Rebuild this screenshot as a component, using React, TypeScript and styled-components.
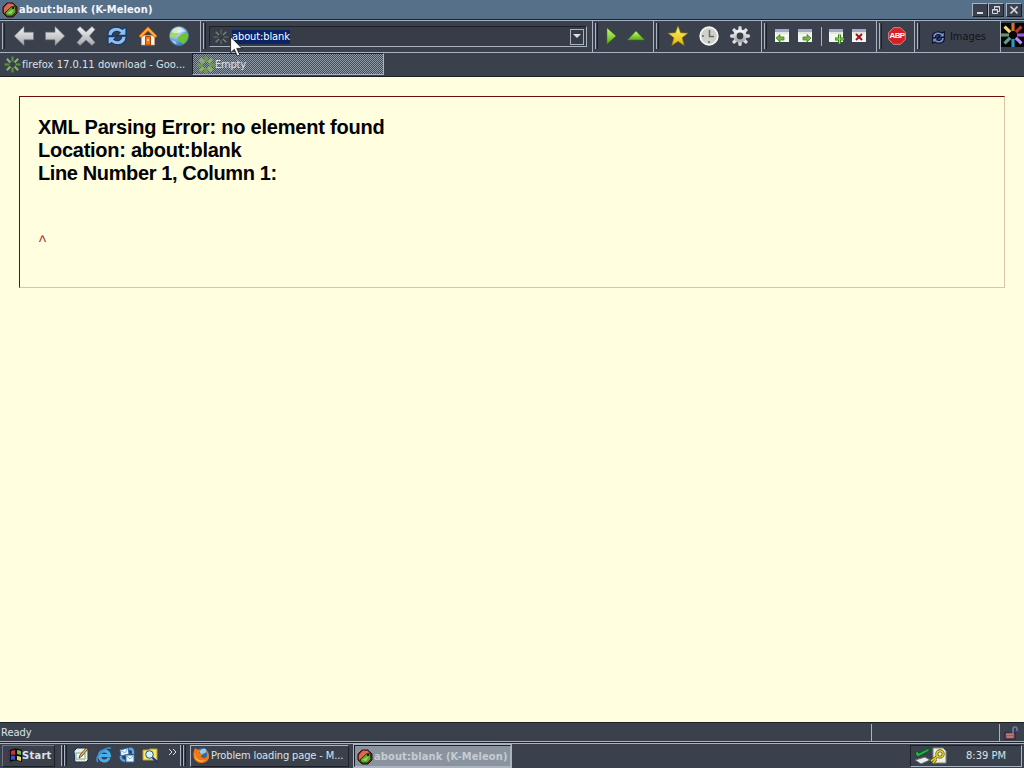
import type { ReactNode } from 'react'
import { createGlobalStyle, styled } from 'styled-components'

const COLORS = {
  chrome: '#3b414c',
  title: '#57708a',
  light: '#a9b3c2',
  dark: '#1c2028',
  text: '#dde1e8',
  page: '#ffffe0'
}

const GlobalStyle = createGlobalStyle`
  * {
    box-sizing: border-box;
  }

  body {
    margin: 0;
    overflow: hidden;
    background: ${COLORS.chrome};
  }

  svg {
    display: block;
    flex: none;
  }
`

const Screen = styled.div`
  display: flex;
  flex-direction: column;
  width: 1024px;
  height: 768px;
  color: ${COLORS.text};
  background: ${COLORS.chrome};
  font-family: 'DejaVu Sans Condensed', 'DejaVu Sans', sans-serif;
  font-stretch: condensed;
  font-size: 11px;
  white-space: nowrap;
  overflow: hidden;
  cursor: default;
`

const Label = styled.span<{ $spacing?: number; $bold?: boolean; $color?: string }>`
  display: block;
  flex: none;
  letter-spacing: ${p => p.$spacing ?? 0}px;
  font-weight: ${p => (p.$bold ? 700 : 400)};
  color: ${p => p.$color ?? 'inherit'};
  line-height: 14px;
`

const TitleBar = styled.div`
  display: flex;
  align-items: center;
  gap: 1px;
  height: 19px;
  padding: 0 2px;
  background: ${COLORS.title};
`

const WindowButtons = styled.div`
  display: flex;
  margin-left: auto;

  button:last-child {
    margin-left: 2px;
  }
`

const WindowButton = styled.button`
  display: flex;
  align-items: center;
  justify-content: center;
  width: 16px;
  height: 14px;
  padding: 0;
  border: 1px solid;
  border-color: ${COLORS.light} ${COLORS.dark} ${COLORS.dark} ${COLORS.light};
  background: ${COLORS.chrome};
`

const Toolbar = styled.div`
  display: flex;
  height: 34px;
  border-top: 1px solid ${COLORS.dark};
  border-bottom: 1px solid ${COLORS.light};
  box-shadow: inset 0 1px ${COLORS.light};
`

const Band = styled.div<{ $width: number }>`
  display: flex;
  align-items: center;
  width: ${p => p.$width}px;
  padding: 0 0 0 2px;
  border-right: 1px solid ${COLORS.light};
`

const Gripper = styled.div<{ $height?: number }>`
  flex: none;
  width: 3px;
  height: ${p => p.$height ?? 26}px;
  border-left: 1px solid ${COLORS.light};
  border-right: 1px solid ${COLORS.dark};
`

const IconCells = styled.div<{ $cell: number; $left: number }>`
  display: grid;
  grid-auto-flow: column;
  grid-auto-columns: ${p => p.$cell}px;
  place-items: center;
  margin-left: ${p => p.$left}px;
`

const Divider = styled.div`
  width: 1px;
  height: 19px;
  margin: 0 1px 0 0;
  background: ${COLORS.light};
`

const AddressBox = styled.div`
  display: flex;
  align-items: center;
  width: 378px;
  height: 21px;
  margin: 1px 0 0 3px;
  padding: 0 2px 0 3px;
  border: 1px solid;
  border-color: ${COLORS.dark} ${COLORS.light} ${COLORS.light} ${COLORS.dark};
  background: #373c47;
`

const Selection = styled.div`
  height: 14px;
  margin: 1px 0 0 3px;
  color: #fff;
  background: #0a2466;
`

const DropButton = styled.div`
  display: flex;
  align-items: center;
  justify-content: center;
  width: 14px;
  height: 16px;
  margin-left: auto;
  border: 1px solid ${COLORS.light};
`

const Faded = styled.div`
  display: flex;
  align-items: center;
  gap: 5px;
  margin: 2px 0 0 12px;
`

const Logo = styled.svg`
  margin-top: 3px;
`

const TabBar = styled.div`
  display: flex;
  height: 24px;
  border-bottom: 1px solid ${COLORS.dark};
`

const Tab = styled.div<{ $active?: boolean }>`
  display: flex;
  align-items: center;
  gap: ${p => (p.$active ? 0 : 1)}px;
  width: 192px;
  height: 22px;
  padding: ${p => (p.$active ? '2px 4px 0' : '1px 4px 0')};
  border: ${p => (p.$active ? '1px solid' : '0')};
  border-color: ${COLORS.dark} ${COLORS.light} ${COLORS.light} ${COLORS.dark};
  background: ${p =>
    p.$active ? 'repeating-conic-gradient(#8f99a6 0 25%, #464e5b 0 50%) 0 0 / 2px 2px' : 'none'};
`

const Page = styled.main`
  flex: 1;
  padding: 19px;
  background: ${COLORS.page};
`

const ErrorBox = styled.section`
  height: 192px;
  padding: 19px 18px;
  border: 1px solid;
  border-color: #700c0c #dfc3a6 #dfc3a6 #700c0c;
  color: #000;
  font: bold 20px/23px 'Liberation Sans', Arial, sans-serif;
`

const ErrorLine = styled.div<{ $spacing: number }>`
  letter-spacing: ${p => p.$spacing}px;
`

const SourceLine = styled.pre`
  margin: 49px 0 0;
  color: #a52020;
  font: 15px/16px 'Liberation Mono', monospace;
`

const StatusBar = styled.div`
  display: flex;
  align-items: center;
  height: 19px;
  padding: 1px 0 0 1px;
  border-top: 1px solid ${COLORS.dark};
`

const StatusPane = styled.div<{ $width: number }>`
  display: flex;
  align-items: center;
  width: ${p => p.$width}px;
  height: 17px;
  border-right: 1px solid ${COLORS.light};
`

const Taskbar = styled.div`
  display: flex;
  align-items: center;
  height: 27px;
  padding: 0 2px 0 3px;
  border-top: 1px solid ${COLORS.light};
  box-shadow: inset 0 1px ${COLORS.dark}, inset 0 2px ${COLORS.light};
`

const TaskButton = styled.div<{ $width: number; $left: number; $pressed?: boolean }>`
  display: flex;
  align-items: center;
  gap: 1px;
  width: ${p => p.$width}px;
  height: 22px;
  margin: 1px 0 0 ${p => p.$left}px;
  padding: ${p => (p.$pressed ? '2px 2px 0' : '0 2px')};
  border: 1px solid;
  border-color: ${p =>
    p.$pressed
      ? `${COLORS.dark} ${COLORS.light} ${COLORS.light} ${COLORS.dark}`
      : `${COLORS.light} ${COLORS.dark} ${COLORS.dark} ${COLORS.light}`};
  background: ${p => (p.$pressed ? '#8b949e' : COLORS.chrome)};
  box-shadow: ${p => (p.$pressed ? `0 0 0 1px ${COLORS.light}` : 'none')};
`

const StartButton = styled(TaskButton)`
  gap: 0;
  border-color: #6d7784 ${COLORS.dark} ${COLORS.dark} #6d7784;
`

const Tray = styled.div`
  display: flex;
  align-items: center;
  width: 112px;
  height: 22px;
  margin: 1px 0 0 auto;
  padding-left: 3px;
  border: 1px solid;
  border-color: ${COLORS.dark} ${COLORS.light} ${COLORS.light} ${COLORS.dark};
`

const MoreIcon = styled.svg`
  margin: -7px 1px 0 7px;
`

const Pointer = styled.svg`
  position: absolute;
  left: 230px;
  top: 36px;
`

const Defs = styled.svg`
  position: absolute;
`

// octagonal sign with its lettering centred on top
const Badge = styled.div`
  display: grid;
  place-items: center;
  width: 22px;
  height: 20px;

  > * {
    grid-area: 1 / 1;
  }
`

const BadgeText = styled.span`
  color: #fff;
  font: bold 8px/10px 'Liberation Sans', Arial, sans-serif;
  letter-spacing: -0.6px;
`

type IconProps = { size?: number; box?: number; children: ReactNode }

const Icon = ({ size = 20, box = 20, children }: IconProps) => (
  <svg width={size} height={size} viewBox={`0 0 ${box} ${box}`}>
    {children}
  </svg>
)

const Gradients = () => (
  <Defs width='0' height='0'>
    <defs>
      <linearGradient id='silver' x1='0' y1='0' x2='0' y2='1'>
        <stop offset='0' stopColor='#f4f4f4' />
        <stop offset='1' stopColor='#a4a7aa' />
      </linearGradient>
      <linearGradient id='green' x1='0' y1='0' x2='0' y2='1'>
        <stop offset='0' stopColor='#caff75' />
        <stop offset='1' stopColor='#58ad15' />
      </linearGradient>
      <linearGradient id='gold' x1='0' y1='0' x2='0' y2='1'>
        <stop offset='0' stopColor='#fff66a' />
        <stop offset='1' stopColor='#e5b800' />
      </linearGradient>
      <radialGradient id='globe' cx='.35' cy='.25' r='.8'>
        <stop offset='0' stopColor='#e4f5ff' />
        <stop offset='1' stopColor='#2872c4' />
      </radialGradient>
    </defs>
  </Defs>
)

const Arrow = ({ right }: { right?: boolean }) => (
  <Icon>
    <path
      transform={right ? 'matrix(-1 0 0 1 20 0)' : undefined}
      d='M.3 10 10 .5v5.7h9.5v7.6H10v5.7Z'
      fill='url(#silver)'
      stroke='#747980'
      strokeWidth='.6'
    />
  </Icon>
)

const Refresh = ({ size = 20, dim }: { size?: number; dim?: boolean }) => (
  <Icon size={size}>
    <g fill={dim ? '#7591d8' : '#8fbdec'} stroke={dim ? '#0d1428' : '#163a6b'} strokeWidth={dim ? 1.8 : 1.3}>
      <path d='M1 10C0 2 9-1 15.5 3.2L19 1v8.5h-9l3-3C9 4 5.5 6 5 10Z' />
      <path d='M19 10c1 8-8 11-14.5 6.8L1 19v-8.500h9l-3 3c4 2.500 7.500.5 8-3.500Z' />
    </g>
  </Icon>
)

const Burst = ({ colors, size = 16, width = 2 }: { colors: string[]; size?: number; width?: number }) => (
  <Icon size={size} box={16}>
    {Array.from({ length: 8 }, (_, i) => (
      <path
        key={i}
        d='M8 .5v4.7'
        stroke={colors[i % colors.length]}
        strokeWidth={width}
        transform={`rotate(${i * 45} 8 8)`}
      />
    ))}
  </Icon>
)

const Meleon = ({ size = 16 }: { size?: number }) => (
  <Icon size={size} box={16}>
    <path d='M5 1h6l4 4v6l-4 4H5l-4-4V5Z' fill='#8c2419' stroke='#24130c' />
    <path d='M2 6 6 1.5 11 2l2 3-6 2-5 4Z' fill='#d96a55' />
    <path d='m3 11 6-6 4-1 1 6-4 4-5 0Z' fill='#55a832' stroke='#14250e' strokeWidth='.8' />
    <path d='m5 11 7-4-3 5Z' fill='#a3d45a' />
    <path d='M10 5h2v2h-2Z' fill='#152010' />
  </Icon>
)

const Home = () => (
  <Icon>
    <path d='M3.5 9.5h13V19h-13Z' fill='#f4f3ee' stroke='#d8a87e' strokeWidth='.6' />
    <path d='M10 .8 19 10l-2 1.7-7-7-7 7L1 10Z' fill='#ffb13c' stroke='#df5b08' />
    <path d='M7.5 10.5h5V19h-5Z' fill='#f37717' stroke='#b54408' />
    <path d='M9 13h2v2H9Z' fill='#ffdd88' />
  </Icon>
)

const Globe = () => (
  <Icon>
    <circle cx='10' cy='10' r='9.5' fill='url(#globe)' stroke='#6a98b9' strokeWidth='.5' />
    <path d='M1 10c1-5 5-8 10-8L8 6l2 2-4 3-4 1Z' fill='#a2d866' />
    <path d='m9 11 4-3 6-1c1 5-2 9-5 11l-3-3-3-1Z' fill='#6dc52f' />
    <path d='M3 6c4-6 10-6 14 0-4-1-9 3-14 0Z' fill='#fff' opacity='.55' />
    <path d='M3 14q3 1 5 4-3 0-5-4Z' fill='#b9e4ff' />
  </Icon>
)

const Clock = () => (
  <Icon>
    <circle cx='10' cy='10' r='8.8' fill='#cfd1cc' stroke='#f6f6f3' strokeWidth='1.8' />
    <path d='M10.5 4v6.5H15M3 10h2m5 5v2' fill='none' stroke='#666b68' strokeWidth='1.5' />
  </Icon>
)

const Gear = () => (
  <Icon>
    {[0, 45, 90, 135, 180, 225, 270, 315].map(angle => (
      <path key={angle} d='m8 5 .6-4.8h2.8L12 5Z' fill='#dedede' transform={`rotate(${angle} 10 10)`} />
    ))}
    <circle cx='10' cy='10' r='5' fill='none' stroke='url(#silver)' strokeWidth='3.2' />
  </Icon>
)

const PageIcon = ({ kind }: { kind: 'back' | 'next' | 'new' | 'close' }) => (
  <Icon size={16} box={16}>
    <path d='M1 1h14v13H1Z' fill='#f4f7f0' />
    <path d='M1 1h14v3H1Z' fill='#a0a9c9' />
    <path d='M2 5h12' stroke='#d1d6cd' />
    {kind === 'back' && <path d='m2 10 4-3.5V9h4v3H6v2Z' fill='#78b93c' stroke='#37751a' strokeWidth='.7' />}
    {kind === 'next' && <path d='m14 10-4-3.5V9H6v3h4v2Z' fill='#78b93c' stroke='#37751a' strokeWidth='.7' />}
    {kind === 'new' && (
      <>
        <path d='M11.5 6.5V16M7 11h9' stroke='#32821d' strokeWidth='3' />
        <path d='M11.5 7v8.5M7.5 11H16' stroke='#a8e64c' />
      </>
    )}
    {kind === 'close' && <path d='m5 6 6 6m0-6-6 6' stroke='#a3121c' strokeWidth='2' />}
  </Icon>
)

const BlockBadge = () => (
  <Badge>
    <svg width='18' height='18' viewBox='0 0 18 18'>
      <path d='M5.5.7h7l4.8 4.8v7l-4.8 4.8h-7L.7 12.5v-7Z' fill='#d91e24' stroke='#e9a0a0' strokeWidth='.8' />
    </svg>
    <BadgeText>ABP</BadgeText>
  </Badge>
)

const WindowsFlag = () => (
  <Icon size={17} box={17}>
    <path d='M0 4h2v2H0Zm0 4h2v2H0Zm0 4h2v2H0Z' fill='#7c2732' />
    <path d='M3 3h2v2H3Zm0 4h2v2H3Zm0 4h2v2H3Z' fill='#24357e' />
    <path d='M5 3q5-3 12 0v12q-7-3-12 0Z' fill='#080a0e' />
    <path d='M6 4q2-1 4-1v5q-2-1-4 0Z' fill='#c6382b' />
    <path d='M12 3q2 0 4 1v4l-4-1Z' fill='#75b83c' />
    <path d='M6 9q2-1 4 0v4q-2-1-4 0Z' fill='#3157d0' />
    <path d='M12 9q2 0 4 1v4l-4-1Z' fill='#e8d553' />
  </Icon>
)

const DesktopIcon = () => (
  <Icon size={16} box={16}>
    <path d='M1 4 4 1h9l2 2v10l-2 2H2Z' fill='#e8f0de' stroke='#16334c' />
    <path d='M3 6h9v6H3Z' fill='#fffce4' stroke='#72a3b1' />
    <path d='m6 11 1-3 6-7 2 1-6 7Z' fill='#f1b34c' stroke='#5c2b14' strokeWidth='.8' />
  </Icon>
)

const ExplorerIcon = () => (
  <Icon size={16} box={16}>
    <path d='M13 10.5c-1 5-9.500 5-9.500-2 0-6 9-6 10 0H5' fill='none' stroke='#4caee9' strokeWidth='3' />
    <path d='M2 15C-2 10 8 0 15 1' fill='none' stroke='#3a91db' strokeWidth='1.5' />
  </Icon>
)

const MailIcon = () => (
  <Icon size={16} box={16}>
    <path d='m1 3 8-2 1 6-8 2ZM7 8h8v7H7Z' fill='#e9f3ff' stroke='#2d72b5' />
    <path d='m1 3 5 3 3-5M7 8l4 4 4-4' fill='none' stroke='#86b8e4' />
    <path d='M10 2q5-1 4 5M2 9q-1 4 4 5' fill='none' stroke='#55a5ef' strokeWidth='2.5' />
  </Icon>
)

const SearchFolder = () => (
  <Icon size={16} box={16}>
    <path d='M1 3h5l2-1h7v11H1Z' fill='#f7e96c' stroke='#b89d2a' />
    <circle cx='7.5' cy='7.5' r='3.8' fill='#d7f1fa' stroke='#1d567c' />
    <path d='m10.5 10.5 5 5' stroke='#153b83' strokeWidth='2' />
  </Icon>
)

const Fox = () => (
  <Icon size={17} box={17}>
    <circle cx='9' cy='8' r='7' fill='#286aaf' />
    <path d='M9 2c4-2 6 2 3 4L8 8 6 4Z' fill='#91cce9' />
    <path d='M2 1c2 2 3 1 5 2L6 6l4 1-2 2c1 3 6 3 6-1l-1-5c5 4 4 13-4 13C2 16-2 10 2 1Z' fill='#ef771a' />
    <path d='M2 6c0 6 5 9 10 7-4 4-12 0-10-7Z' fill='#ffc334' />
  </Icon>
)

const TrayIcons = () => (
  <svg width='35' height='18' viewBox='0 0 35 18'>
    <path d='m1 13 10-3 5 3-9 4Z' fill='#e8ece8' stroke='#5f686c' />
    <path d='m1 7 3 3L15 4V1L5 6 3 4Z' fill='#20b143' stroke='#07551e' />
    <path d='M19 1h10l3 3v12H19Z' fill='#eeeee3' stroke='#818478' />
    <path d='m17 14 7-5m-5 7 3-4' stroke='#716b08' strokeWidth='3' />
    <circle cx='26' cy='7' r='3.2' fill='none' stroke='#716b08' strokeWidth='3' />
    <path d='m17 14 7-5m-5 7 3-4' stroke='#e2d73b' strokeWidth='1.3' />
    <circle cx='26' cy='7' r='3.2' fill='none' stroke='#e2d73b' strokeWidth='1.3' />
  </svg>
)

const LockIcon = () => (
  <Icon size={16} box={16}>
    <path d='M1 8h10v6H1Z' fill='#985e60' stroke='#251d30' />
    <path d='M2 9h8M3 12h6' stroke='#d79686' />
    <path d='M9 8V4q0-2 2-2t2 2v2' fill='none' stroke='#7777b1' strokeWidth='1.6' />
  </Icon>
)

const BURST_GREEN = ['#5b9040', '#86bb60']
const BURST_DIM = ['#596d65', '#778780']
// clockwise from the top
const BURST_RAINBOW = ['#cf7233', '#b93429', '#a653dc', '#b490ee', '#3095c4', '#5d9f94', '#66936c', '#f5d975']

const App = () => (
  <Screen>
    <GlobalStyle />
    <Gradients />
    <TitleBar>
      <Meleon />
      <Label $bold $spacing={0.12} $color='#f4f6fa'>
        about:blank (K-Meleon)
      </Label>
      <WindowButtons>
        <WindowButton>
          <svg width='10' height='10'>
            <path d='M2 8h6' stroke='#d5dae2' strokeWidth='2' />
          </svg>
        </WindowButton>
        <WindowButton>
          <svg width='10' height='10'>
            <path d='M3.5 4V1.5h5v5H6M3 2h6M1.5 4.5h5v4h-5ZM1 5h6' fill='none' stroke='#d5dae2' />
          </svg>
        </WindowButton>
        <WindowButton>
          <svg width='10' height='10'>
            <path d='m1.5 1.5 7 7m0-7-7 7' stroke='#d5dae2' strokeWidth='1.6' />
          </svg>
        </WindowButton>
      </WindowButtons>
    </TitleBar>
    <Toolbar>
      <Band $width={201}>
        <Gripper />
        <IconCells $cell={31} $left={3}>
          <Arrow />
          <Arrow right />
          <Icon>
            <path
              d='m1 3.5 3-3L10 6l6-5.500 3 3L13.500 10l5.500 6.500-3 3-6-5.500-6 5.500-3-3L6.500 10Z'
              fill='url(#silver)'
              stroke='#747980'
              strokeWidth='.6'
            />
          </Icon>
          <Refresh />
          <Home />
          <Globe />
        </IconCells>
      </Band>
      <Band $width={392}>
        <Gripper />
        <AddressBox>
          <Burst colors={BURST_DIM} width={1.3} />
          <Selection>
            <Label $spacing={-0.1}>about:blank</Label>
          </Selection>
          <DropButton>
            <svg width='8' height='5'>
              <path d='M0 0h8L4 4Z' fill='#dce0e7' />
            </svg>
          </DropButton>
        </AddressBox>
      </Band>
      <Band $width={61}>
        <Gripper />
        <IconCells $cell={25} $left={0}>
          <Icon>
            <path d='m6 2 9 8-9 8Z' fill='url(#green)' stroke='#3a7e0b' strokeWidth='.5' />
          </Icon>
          <Icon>
            <path d='m1.5 14 8.500-9 8.500 9Z' fill='url(#green)' stroke='#3a7e0b' strokeWidth='.5' />
          </Icon>
        </IconCells>
      </Band>
      <Band $width={108}>
        <Gripper />
        <IconCells $cell={31} $left={3}>
          <Icon>
            <path
              d='m10 0 2.6 6.8 7.2.4-5.7 4.6 2.1 7.700L10 15.300l-6.200 4.200 2.100-7.700L.2 7.200l7.200-.4Z'
              fill='url(#gold)'
              stroke='#98770b'
              strokeWidth='.6'
            />
          </Icon>
          <Clock />
          <Gear />
        </IconCells>
      </Band>
      <Band $width={115}>
        <Gripper />
        <IconCells $cell={23} $left={3}>
          <PageIcon kind='back' />
          <PageIcon kind='next' />
        </IconCells>
        <IconCells $cell={8} $left={2}>
          <Divider />
        </IconCells>
        <IconCells $cell={23} $left={-2}>
          <PageIcon kind='new' />
          <PageIcon kind='close' />
        </IconCells>
      </Band>
      <Band $width={38}>
        <Gripper />
        <IconCells $cell={30} $left={0}>
          <BlockBadge />
        </IconCells>
      </Band>
      <Band $width={86}>
        <Gripper />
        <Faded>
          <Refresh size={13} dim />
          <Label $spacing={-0.05} $color='#10131a'>
            Images
          </Label>
        </Faded>
      </Band>
      <Logo width='23' height='24' viewBox='0 0 23 24'>
        <path d='M0 0h23v24H0Z' fill='#050505' />
        {BURST_RAINBOW.map((color, i) => (
          <path
            key={color}
            d='M12 0v8'
            stroke={color}
            strokeWidth='3.2'
            transform={`rotate(${i * 45} 12 12)`}
          />
        ))}
      </Logo>
    </Toolbar>
    <TabBar>
      <Tab>
        <Burst colors={BURST_GREEN} size={17} />
        <Label $spacing={0.04}>firefox 17.0.11 download - Goo...</Label>
      </Tab>
      <Tab $active>
        <Burst colors={['#73994f', '#8bb366']} size={18} width={3} />
        <Label $spacing={-0.2}>Empty</Label>
      </Tab>
    </TabBar>
    <Page>
      <ErrorBox>
        <ErrorLine $spacing={-0.22}>XML Parsing Error: no element found</ErrorLine>
        <ErrorLine $spacing={-0.26}>Location: about:blank</ErrorLine>
        <ErrorLine $spacing={-0.38}>Line Number 1, Column 1:</ErrorLine>
        <SourceLine>^</SourceLine>
      </ErrorBox>
    </Page>
    <StatusBar>
      <StatusPane $width={871}>
        <Label>Ready</Label>
      </StatusPane>
      <StatusPane $width={128} />
      <IconCells $cell={16} $left={4}>
        <LockIcon />
      </IconCells>
    </StatusBar>
    <Taskbar>
      <StartButton $width={53} $left={-1}>
        <WindowsFlag />
        <Label $bold $spacing={0.3}>
          Start
        </Label>
      </StartButton>
      <IconCells $cell={3} $left={6}>
        <Gripper $height={21} />
        <Gripper $height={21} />
      </IconCells>
      <IconCells $cell={23} $left={2}>
        <DesktopIcon />
        <ExplorerIcon />
        <MailIcon />
        <SearchFolder />
      </IconCells>
      <MoreIcon width='10' height='10'>
        <path d='m1 2 3 3-3 3m4-6 3 3-3 3' fill='none' stroke='#dce0e7' />
      </MoreIcon>
      <IconCells $cell={3} $left={1}>
        <Gripper $height={21} />
        <Gripper $height={21} />
      </IconCells>
      <TaskButton $width={159} $left={4}>
        <Fox />
        <Label $spacing={-0.13}>Problem loading page - M...</Label>
      </TaskButton>
      <TaskButton $width={157} $left={5} $pressed>
        <Meleon />
        <Label $bold $spacing={0.12} $color='#c5ccd4'>
          about:blank (K-Meleon)
        </Label>
      </TaskButton>
      <Tray>
        <TrayIcons />
        <IconCells $cell={44} $left={15}>
          <Label>8:39 PM</Label>
        </IconCells>
      </Tray>
    </Taskbar>
    <Pointer width='13' height='21' viewBox='0 0 13 21'>
      <path d='M.6.8v16l3.7-3.5 3 6.7 2.5-1.1-3-6.5H12Z' fill='#fff' stroke='#111' strokeWidth='.8' />
    </Pointer>
  </Screen>
)

export default App
